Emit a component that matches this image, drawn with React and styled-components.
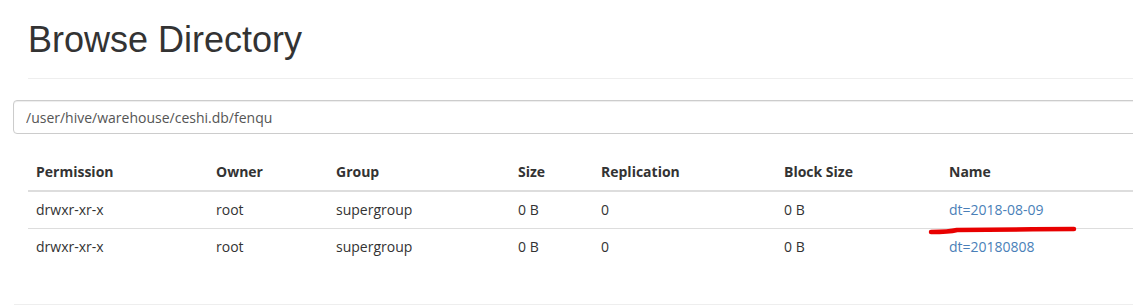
import React from "react";
import styled, { createGlobalStyle } from "styled-components";

const Global = createGlobalStyle`
  html, body { margin: 0; padding: 0; background: #fff; overflow: hidden; }
  body { font-family: "Open Sans", "Noto Sans", sans-serif; font-size: 14px; color: #333; }
`;

const Page = styled.div`
  position: relative;
  width: 1200px;
  padding: 20px 0 0 13px;
  box-sizing: border-box;
`;

const Header = styled.div`
  margin-left: 15px;
  padding-bottom: 18px;
  border-bottom: 1px solid #eee;
`;

const Title = styled.h1`
  margin: 0;
  font-family: "Liberation Sans", Arial, sans-serif;
  font-weight: 500;
  font-size: 36px;
  line-height: 40px;
  color: #333;
`;

const PathInput = styled.input`
  display: block;
  box-sizing: border-box;
  margin-top: 21px;
  width: 1180px;
  height: 34px;
  padding: 6px 12px;
  border: 1px solid #ccc;
  border-radius: 4px;
  font-family: "Open Sans", "Noto Sans", sans-serif;
  font-size: 14px;
  color: #555;
  box-shadow: inset 0 1px 1px rgba(0,0,0,0.075);
  outline: none;
`;

const Table = styled.table`
  margin: 20px 0 0 15px;
  width: 1160px;
  table-layout: fixed;
  border-collapse: collapse;
  border-spacing: 0;
`;

const Th = styled.th`
  text-align: left;
  font-weight: 700;
  padding: 8px;
  line-height: 20px;
  border-bottom: 2px solid #ddd;
  width: ${(p) => p.$w};
`;

const Td = styled.td`
  padding: 8px;
  line-height: 20px;
  border-top: 1px solid #ddd;
  white-space: nowrap;
`;

const Link = styled.a`
  color: #4a7fb8;
  text-decoration: none;
`;

const Footer = styled.div`
  margin-top: 39px;
  margin-left: 1px;
  border-top: 1px solid #eee;
`;

const Mark = styled.svg`
  position: absolute;
  left: 925px;
  top: 222px;
  width: 160px;
  height: 16px;
  overflow: visible;
`;

const cols = [
  ["Permission", "164px"],
  ["Owner", "104px"],
  ["Group", "166px"],
  ["Size", "67px"],
  ["Replication", "167px"],
  ["Block Size", "149px"],
  ["Name", "231px"],
];

const rows = [
  ["drwxr-xr-x", "root", "supergroup", "0 B", "0", "0 B", "dt=2018-08-09"],
  ["drwxr-xr-x", "root", "supergroup", "0 B", "0", "0 B", "dt=20180808"],
];

export default function App() {
  return (
    <Page>
      <Global />
      <Header>
        <Title>Browse Directory</Title>
      </Header>
      <PathInput readOnly value="/user/hive/warehouse/ceshi.db/fenqu" />
      <Table>
        <thead>
          <tr>
            {cols.map(([c, w]) => (
              <Th key={c} $w={w}>{c}</Th>
            ))}
          </tr>
        </thead>
        <tbody>
          {rows.map((r, i) => (
            <tr key={i}>
              {r.slice(0, 6).map((v, j) => (
                <Td key={j}>{v}</Td>
              ))}
              <Td>
                <Link href="#">{r[6]}</Link>
              </Td>
            </tr>
          ))}
        </tbody>
      </Table>
      <Footer />
      <Mark viewBox="0 0 160 16">
        <path
          d="M6 10 C 14 10, 26 9.5, 32 8 C 60 7.5, 110 7.5, 149 7"
          stroke="#e80000"
          strokeWidth="4.5"
          strokeLinecap="round"
          fill="none"
        />
      </Mark>
    </Page>
  );
}
